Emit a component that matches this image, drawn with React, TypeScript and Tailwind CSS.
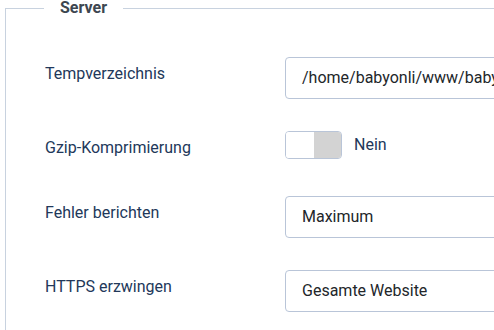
import React from "react";

function Row({ label, children, className }: { label: string; children: React.ReactNode; className?: string }) {
  return (
    <div className={"flex " + (className ?? "")}>
      <div className="w-[279px] shrink-0 pl-[39px] pt-[5px] text-[16px] leading-[24px] text-[#22385a]">{label}</div>
      <div className="flex-1 min-w-0">{children}</div>
    </div>
  );
}

export default function App() {
  return (
    <div className="w-[494px] h-[330px] overflow-hidden bg-white" style={{ fontFamily: "Roboto, 'Noto Sans', sans-serif" }}>
      <fieldset className="ml-[5px] border border-[#c8d2df] w-[560px] h-[400px] p-0 m-0">
        <legend className="ml-[38px] px-[16px] text-[16px] leading-[16px] font-bold text-[#3d4650]">Server</legend>
        <div className="pt-[41px]">
          <Row label="Tempverzeichnis" className="mb-[32px]">
            <div className="h-[42px] w-[400px] overflow-hidden whitespace-nowrap rounded-[4px] border border-[#b9c5d8] bg-white pl-[16px] flex items-center text-[16px] text-[#22262a]">
              /home/babyonli/www/babyonline/tmp
            </div>
          </Row>
          <Row label="Gzip-Komprimierung" className="mb-[36px]">
            <div className="flex items-center gap-[12px]">
              <div className="flex h-[28px] w-[57px] overflow-hidden rounded-[4px] border border-[#b9c5d8]">
                <div className="w-[28px] bg-white" />
                <div className="flex-1 bg-[#d3d3d3]" />
              </div>
              <span className="text-[16px] text-[#22385a]">Nein</span>
            </div>
          </Row>
          <Row label="Fehler berichten" className="mb-[32px]">
            <div className="h-[42px] w-[400px] rounded-[4px] border border-[#b9c5d8] bg-white pl-[16px] flex items-center text-[16px] text-[#22262a]">
              Maximum
            </div>
          </Row>
          <Row label="HTTPS erzwingen">
            <div className="h-[42px] w-[400px] rounded-[4px] border border-[#b9c5d8] bg-white pl-[16px] flex items-center text-[16px] text-[#22262a]">
              Gesamte Website
            </div>
          </Row>
        </div>
      </fieldset>
    </div>
  );
}
